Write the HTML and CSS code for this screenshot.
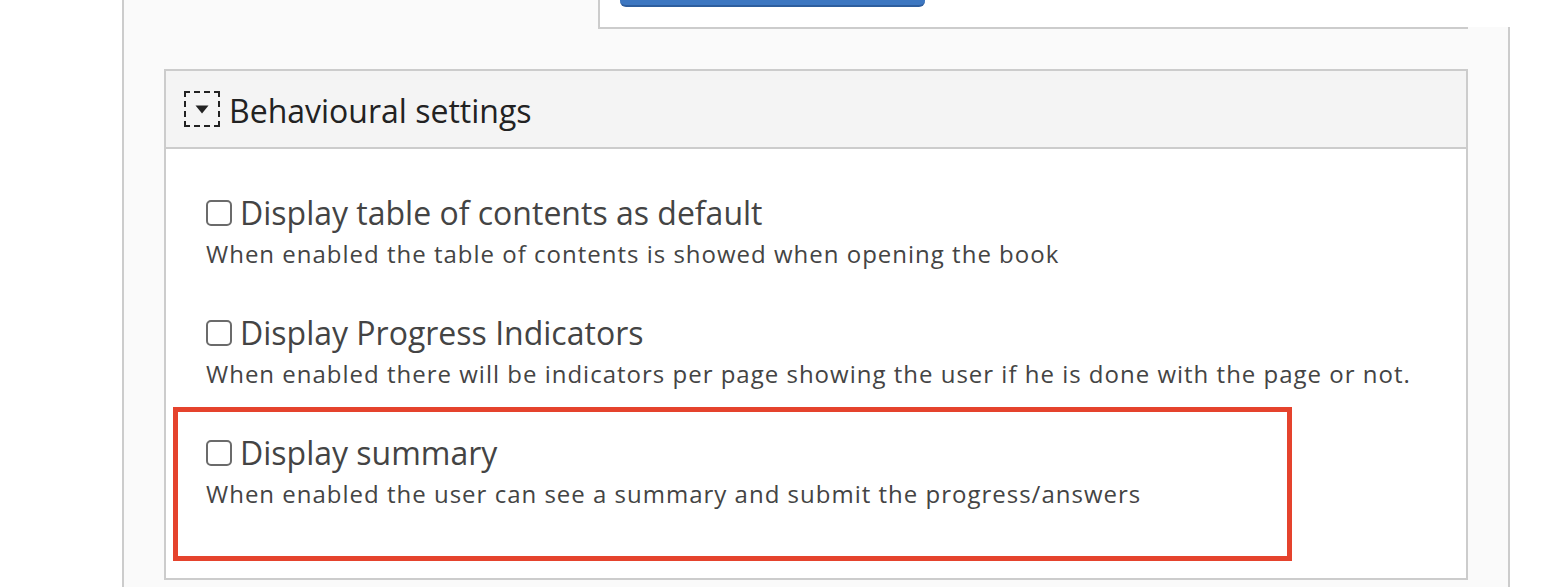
FILE: index.html
```html
<!DOCTYPE html>
<html lang="en">
<head>
<meta charset="utf-8">
<title>Behavioural settings</title>
<link rel="stylesheet" href="styles.css">
</head>
<body>
<div class="page">
  <div class="topbar">
    <div class="top-left"></div>
    <div class="top-box"><div class="btn"></div></div>
    <div class="top-right"></div>
  </div>
  <div class="main">
    <section class="panel">
      <header class="panel-head">
        <span class="toggle">
          <svg width="14" height="9" viewBox="0 0 14 9"><path d="M0.5 0.5 H13.5 L7 8.5 Z" fill="#222"/></svg>
        </span>
        <span class="panel-title">Behavioural settings</span>
      </header>
      <div class="panel-body">
        <div class="field">
          <label class="field-label"><span class="cb"></span>Display table of contents as default</label>
          <div class="field-desc">When enabled the table of contents is showed when opening the book</div>
        </div>
        <div class="field">
          <label class="field-label"><span class="cb"></span>Display Progress Indicators</label>
          <div class="field-desc">When enabled there will be indicators per page showing the user if he is done with the page or not.</div>
        </div>
        <div class="field field-marked">
          <div class="highlight"></div>
          <label class="field-label"><span class="cb"></span>Display summary</label>
          <div class="field-desc">When enabled the user can see a summary and submit the progress/answers</div>
        </div>
      </div>
    </section>
  </div>
</div>
</body>
</html>
```
FILE: styles.css
```css
html, body {
  margin: 0;
  padding: 0;
  background: #fff;
  font-family: "Open Sans", "DejaVu Sans", sans-serif;
  overflow: hidden;
}
.page {
  margin-left: 122px;
  width: 1388px;
}
.topbar {
  display: flex;
  align-items: flex-start;
  height: 29px;
}
.top-left {
  width: 474px;
  height: 29px;
  background: #fafafa;
  border-left: 2px solid #cccccc;
}
.top-box {
  box-sizing: border-box;
  width: 870px;
  height: 29px;
  background: #fff;
  border-left: 2px solid #cccccc;
  border-bottom: 2px solid #cccccc;
  padding-left: 20px;
}
.btn {
  width: 305px;
  height: 5px;
  background: #3d77c1;
  border-bottom: 2px solid #2e5e9e;
  border-radius: 0 0 6px 6px;
}
.top-right {
  flex: 1;
  margin-top: 27px;
  height: 2px;
  background: #fafafa;
  border-right: 2px solid #cccccc;
}
.main {
  background: #fafafa;
  border-left: 2px solid #cccccc;
  border-right: 2px solid #cccccc;
  padding: 40px 40px 20px 40px;
}
.panel {
  background: #fff;
  border: 2px solid #cccccc;
}
.panel-head {
  display: flex;
  align-items: center;
  height: 76px;
  padding-left: 18px;
  background: #f4f4f4;
  border-bottom: 2px solid #cccccc;
}
.toggle {
  box-sizing: border-box;
  width: 36px;
  height: 36px;
  border: 2px dashed #222;
  display: flex;
  align-items: center;
  justify-content: center;
  margin-right: 9px;
}
.panel-title {
  font-size: 32px;
  color: #222;
  line-height: 40px;
  margin-top: 3px;
}
.panel-body {
  padding: 45px 40px 69px 40px;
}
.field {
  margin-bottom: 45px;
}
.field:last-child {
  margin-bottom: 0;
}
.field-marked {
  position: relative;
}
.highlight {
  position: absolute;
  left: -33px;
  top: -27px;
  width: 1119px;
  height: 154px;
  box-sizing: border-box;
  border: 5px solid #e5432d;
}
.field-label {
  display: flex;
  align-items: center;
  height: 36px;
  font-size: 32px;
  color: #444;
}
.cb {
  box-sizing: border-box;
  width: 26px;
  height: 26px;
  border: 2px solid #6b6b6b;
  border-radius: 5px;
  margin-right: 8px;
  margin-top: 2px;
  background: #fff;
}
.field-desc {
  margin-top: 9px;
  font-size: 24px;
  line-height: 30px;
  letter-spacing: 1px;
  color: #444;
}
```
